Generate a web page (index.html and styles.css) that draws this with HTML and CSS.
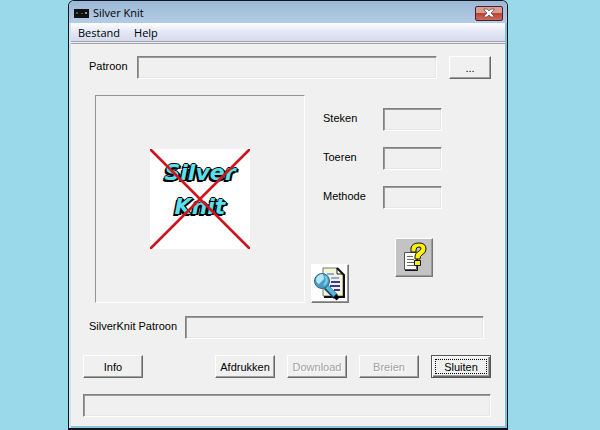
FILE: index.html
```
<!DOCTYPE html>
<html lang="nl">
<head>
    <meta charset="UTF-8">
    <meta name="viewport" content="width=device-width, initial-scale=1.0">
    <title>Silver Knit</title>
    <link rel="stylesheet" href="styles.css">
</head>
<body>
    <div class="window">
        <header class="titlebar">
            <svg class="app-icon" width="15" height="9" viewBox="0 0 15 9">
                <rect width="15" height="9" fill="#111"/>
                <path d="M2 3h2v2H2zM7 4h2v1H7z" fill="#4a5a4a"/>
                <path d="M11 3h2v2h-2z" fill="#8a9a8a"/>
            </svg>
            <h1>Silver Knit</h1>
            <button type="button" class="close" aria-label="Close">
                <svg width="12" height="10" viewBox="0 0 12 10">
                    <path d="M1 1h3l2 2 2-2h3v1L8 5l3 3v1H8L6 7 4 9H1V8l3-3-3-3z" fill="#fff" stroke="#5b4a5c" stroke-width=".8"/>
                </svg>
            </button>
        </header>

        <nav class="menu">
            <a href="#">Bestand</a>
            <a href="#">Help</a>
        </nav>

        <main class="form">
            <div class="row file-row">
                <label for="pattern">Patroon</label>
                <input type="text" id="pattern">
                <button type="button" class="btn browse">...</button>
            </div>

            <div class="middle">
                <div class="preview">
                    <div class="logo">
                        <span>Silver</span>
                        <span>Knit</span>
                        <svg class="cross" viewBox="0 0 100 100">
                            <path d="M1 1l98 98M99 1L1 99" stroke="#cb1620" stroke-width="2.6" stroke-linecap="round"/>
                        </svg>
                    </div>
                </div>

                <div class="side">
                    <div class="specs">
                        <label for="stitches">Steken</label>
                        <input type="text" id="stitches">
                        <label for="rows">Toeren</label>
                        <input type="text" id="rows">
                        <label for="method">Methode</label>
                        <input type="text" id="method">
                    </div>
                    <div class="tools">
                        <button type="button" class="tool view" aria-label="Bekijken">
                            <svg width="34" height="35" viewBox="0 0 34 35">
                                <path d="M10 2h14l6 6v22H10z" fill="#f5f5d2" stroke="#707878"/>
                                <path d="M24 2v6h6" fill="#fff" stroke="#222"/>
                                <path d="M24 2l7 7v22H11" fill="none" stroke="#111" stroke-width="2"/>
                                <path d="M14 8h7M18 12h8" stroke="#8fa5ee" stroke-width="2"/>
                                <path d="M18 16h9M17 20h10M21 24h6" stroke="#3434b4" stroke-width="2"/>
                                <path d="M13 21l10 10" stroke="#143c5c" stroke-width="6"/>
                                <path d="M13 20l9 9" stroke="#56b4de" stroke-width="4"/>
                                <path d="M22 30l3 3" stroke="#000" stroke-width="4"/>
                                <circle cx="9" cy="15" r="7.500" fill="#4a9cc4" stroke="#2b6685"/>
                                <path d="M3 13q2-5 7-5l1 5-5 5q-3-1-3-5z" fill="#b4e6f8"/>
                                <path d="M12 10q4 5-1 9" fill="none" stroke="#82d2ee" stroke-width="2"/>
                            </svg>
                        </button>
                        <button type="button" class="tool help" aria-label="Help">
                            <svg width="34" height="35" viewBox="0 0 34 35">
                                <path d="M7.500 12.500h12v17h-12z" fill="#fff" stroke="#555"/>
                                <path d="M20.500 14v16.500H8" fill="none" stroke="#111"/>
                                <path d="M10 16.500h6M10 19.500h7M10 22.500h7M10 25.500h7" stroke="#666"/>
                                <path d="M14 12V8q1-5 8-5 7 0 7 6 0 4-4 6-2 1-2 4h-5v-3q0-3 4-5 2-1 2-3 0-1-2-1-3 0-3 3v2z" fill="#fff200" stroke="#111"/>
                                <path d="M17.500 20.500h6v5h-6z" fill="#fff200" stroke="#111"/>
                            </svg>
                        </button>
                    </div>
                </div>
            </div>

            <div class="row sk-row">
                <label for="sk-pattern">SilverKnit Patroon</label>
                <input type="text" id="sk-pattern">
            </div>

            <div class="buttons">
                <button type="button" class="btn info">Info</button>
                <button type="button" class="btn">Afdrukken</button>
                <button type="button" class="btn" disabled>Download</button>
                <button type="button" class="btn" disabled>Breien</button>
                <button type="button" class="btn default">Sluiten</button>
            </div>

            <div class="status"></div>
        </main>
    </div>
</body>
</html>
```
FILE: styles.css
```
* {
    box-sizing: border-box;
}

body {
    margin: 0;
    padding: 0 92px 0 68px;
    background-color: #99d9ea;
    font-family: "Liberation Sans", Arial, sans-serif;
    font-size: 11px;
    line-height: 14px;
    color: #000;
}

.window {
    background-color: #f0f0f0;
    border: 1px solid #10141c;
    border-bottom-width: 2px;
    border-radius: 6px 6px 0 0;
    box-shadow: inset 2px 0 #cfe6f0, inset -2px 0 #7cc3d8, inset 0 -2px #86c8da;
    overflow: hidden;
}

/* Title bar and menu */

.titlebar {
    display: flex;
    align-items: center;
    height: 22px;
    padding: 2px 4px 0 5px;
    background: linear-gradient(#9bb8d6, #b4cce6);
}

.titlebar h1 {
    flex: 1;
    margin: 0 0 0 4px;
    font-family: "Open Sans", sans-serif;
    font-size: 11px;
    font-weight: 400;
}

.close {
    display: flex;
    align-items: center;
    justify-content: center;
    width: 28px;
    height: 15px;
    padding: 0;
    background: linear-gradient(#dc9c90 45%, #bb4433 50%, #cc6a58);
    border: 1px solid #4c2030;
    border-radius: 2px;
}

.menu {
    display: flex;
    gap: 14px;
    margin: 0 2px;
    padding: 3px 7px 1px;
    background: linear-gradient(#fff, #e6eaf6 45%, #d4daee);
    border-bottom: 1px solid #a4a6ae;
}

.menu a {
    font-family: "Open Sans", sans-serif;
    font-size: 11px;
    color: #000;
    text-decoration: none;
}

/* Form */

.form {
    margin: 1px 2px 0;
    padding: 12px 14px 11px 12px;
    border-top: 1px solid #a0a0a0;
}

.row {
    display: flex;
    align-items: center;
}

.row label {
    padding: 0 0 3px 6px;
}

.row input {
    flex: 1;
    min-width: 0;
}

input,
.status {
    height: 23px;
    padding: 0 4px;
    background-color: #f0f0f0;
    border: 1px solid;
    border-color: #808080 #fff #fff #808080;
    border-radius: 0;
    box-shadow: inset 1px 1px #9a9a9a, inset -1px -1px #e6e6e6;
    font: inherit;
}

.file-row label {
    width: 54px;
}

.browse {
    margin-left: 12px;
}

.btn {
    width: 60px;
    height: 23px;
    padding: 0;
    background-color: #f0f0f0;
    border: 1px solid;
    border-color: #fff #696969 #696969 #fff;
    box-shadow: inset -1px -1px #a0a0a0;
    font: inherit;
    color: #000;
}

.btn.browse {
    width: 42px;
}

.btn:disabled {
    color: #a0a0a0;
    text-shadow: 1px 1px #fff;
}

.btn.default {
    border-color: #555;
    box-shadow: inset 1px 1px #fff, inset -1px -1px #696969, inset -2px -2px #a0a0a0;
    outline: 1px dotted #000;
    outline-offset: -5px;
}

.middle {
    display: flex;
    gap: 6px;
    margin-top: 16px;
    padding-left: 12px;
}

.preview {
    display: flex;
    align-items: center;
    justify-content: center;
    width: 210px;
    height: 208px;
    border: 1px solid;
    border-color: #949494 #fff #fff #949494;
}

.logo {
    position: relative;
    width: 100px;
    height: 100px;
    padding-top: 7px;
    background-color: #fff;
    font-family: "DejaVu Sans", sans-serif;
    font-size: 22px;
    font-style: italic;
    font-weight: 700;
    line-height: 34px;
    text-align: center;
    color: #5ce0ee;
    text-shadow: -1px 0 #000, 1px 0 #000, 0 -1px #000, 0 1px #000, -1px 2px #000, -2px 2px #000, 1px 1px #000, 2px 1px #000;
}

.logo span {
    display: block;
}

.cross {
    position: absolute;
    inset: 0;
}

.side {
    display: flex;
    flex: 1;
    flex-direction: column;
    justify-content: space-between;
    padding-top: 13px;
}

.specs {
    display: grid;
    grid-template-columns: 60px 59px;
    gap: 16px 0;
    align-items: center;
    padding-left: 12px;
}

.specs label {
    padding-bottom: 3px;
}

.specs input {
    width: 100%;
}

.tools {
    display: flex;
    gap: 46px;
    height: 65px;
}

.tool {
    display: flex;
    align-items: center;
    justify-content: center;
    width: 38px;
    height: 39px;
    padding: 0;
    border: 1px solid;
    border-color: #fff #777 #777 #fff;
    box-shadow: inset -1px -1px #999;
}

.tool.view {
    align-self: flex-end;
    background-color: #fff;
}

.tool.help {
    background-color: #c3c3c3;
}

.sk-row {
    margin-top: 13px;
    padding-right: 7px;
}

.sk-row label {
    width: 102px;
}

.buttons {
    display: flex;
    gap: 12px;
    margin-top: 16px;
}

.info {
    margin-right: auto;
}

.status {
    margin-top: 16px;
}
```
